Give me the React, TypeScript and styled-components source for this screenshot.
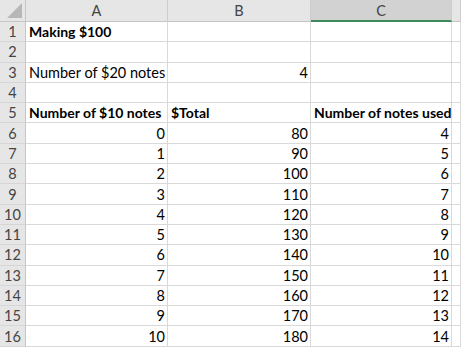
import { Fragment } from 'react';
import styled, { createGlobalStyle } from 'styled-components';

const GlobalStyle = createGlobalStyle`
	html, body {
		margin: 0;
		padding: 0;
		background: #ffffff;
	}
	body {
		font-family: Lato, 'Liberation Sans', sans-serif;
	}
`;

const Sheet = styled.div`
	display: grid;
	grid-template-columns: 26px 142px 143px 141px 9px;
	grid-template-rows: 22px repeat(16, 20.3px);
	width: 461px;
	height: 351px;
	overflow: hidden;
	background: #ffffff;
`;

const Corner = styled.div`
	background: #e6e6e6;
	border-right: 1px solid #c6c6c6;
	border-bottom: 1px solid #c6c6c6;
	display: flex;
	align-items: flex-end;
	justify-content: flex-end;
	padding: 0 3px 3px 0;
`;

const Triangle = styled.div`
	width: 0;
	height: 0;
	border-left: 15px solid transparent;
	border-bottom: 15px solid #b7b7b7;
`;

const ColHead = styled.div<{ $selected?: boolean }>`
	background: ${({ $selected }) => ($selected ? '#d2d2d2' : '#e6e6e6')};
	border-right: 1px solid #cdcdcd;
	border-bottom: ${({ $selected }) => ($selected ? '2px solid #3f8a5d' : '1px solid #c6c6c6')};
	color: #444444;
	font-size: 14.5px;
	display: flex;
	align-items: center;
	justify-content: center;
	box-sizing: border-box;
`;

const RowHead = styled.div`
	background: #e6e6e6;
	border-right: 1px solid #c6c6c6;
	border-bottom: 1px solid #d6d6d6;
	color: #444444;
	font-size: 14.5px;
	display: flex;
	align-items: center;
	justify-content: center;
	box-sizing: border-box;
`;

const Cell = styled.div<{ $bold?: boolean; $right?: boolean }>`
	border-right: 1px solid #d9d9d9;
	border-bottom: 1px solid #d9d9d9;
	color: #000000;
	font-size: ${({ $bold }) => ($bold ? '14px' : '14.5px')};
	font-weight: ${({ $bold }) => ($bold ? 700 : 400)};
	display: flex;
	align-items: center;
	justify-content: ${({ $right }) => ($right ? 'flex-end' : 'flex-start')};
	padding: 0 2px 0 3px;
	white-space: nowrap;
	overflow: visible;
	box-sizing: border-box;
	min-width: 0;
`;

type CellData = { text?: string; bold?: boolean; right?: boolean };

const rows: CellData[][] = [
	[{ text: 'Making $100', bold: true }, {}, {}],
	[{}, {}, {}],
	[{ text: 'Number of $20 notes' }, { text: '4', right: true }, {}],
	[{}, {}, {}],
	[
		{ text: 'Number of $10 notes', bold: true },
		{ text: '$Total', bold: true },
		{ text: 'Number of notes used', bold: true },
	],
	...Array.from({ length: 11 }, (_, i) => [
		{ text: String(i), right: true },
		{ text: String(80 + i * 10), right: true },
		{ text: String(4 + i), right: true },
	]),
];

function App() {
	return (
		<>
			<GlobalStyle />
			<Sheet>
				<Corner>
					<Triangle />
				</Corner>
				<ColHead>A</ColHead>
				<ColHead>B</ColHead>
				<ColHead $selected>C</ColHead>
				<ColHead />
				{rows.map((row, r) => (
					<Fragment key={r}>
						<RowHead>{r + 1}</RowHead>
						{row.map((cell, c) => (
							<Cell key={c} $bold={cell.bold} $right={cell.right}>
								{cell.text}
							</Cell>
						))}
						<Cell />
					</Fragment>
				))}
			</Sheet>
		</>
	);
}

export default App;
